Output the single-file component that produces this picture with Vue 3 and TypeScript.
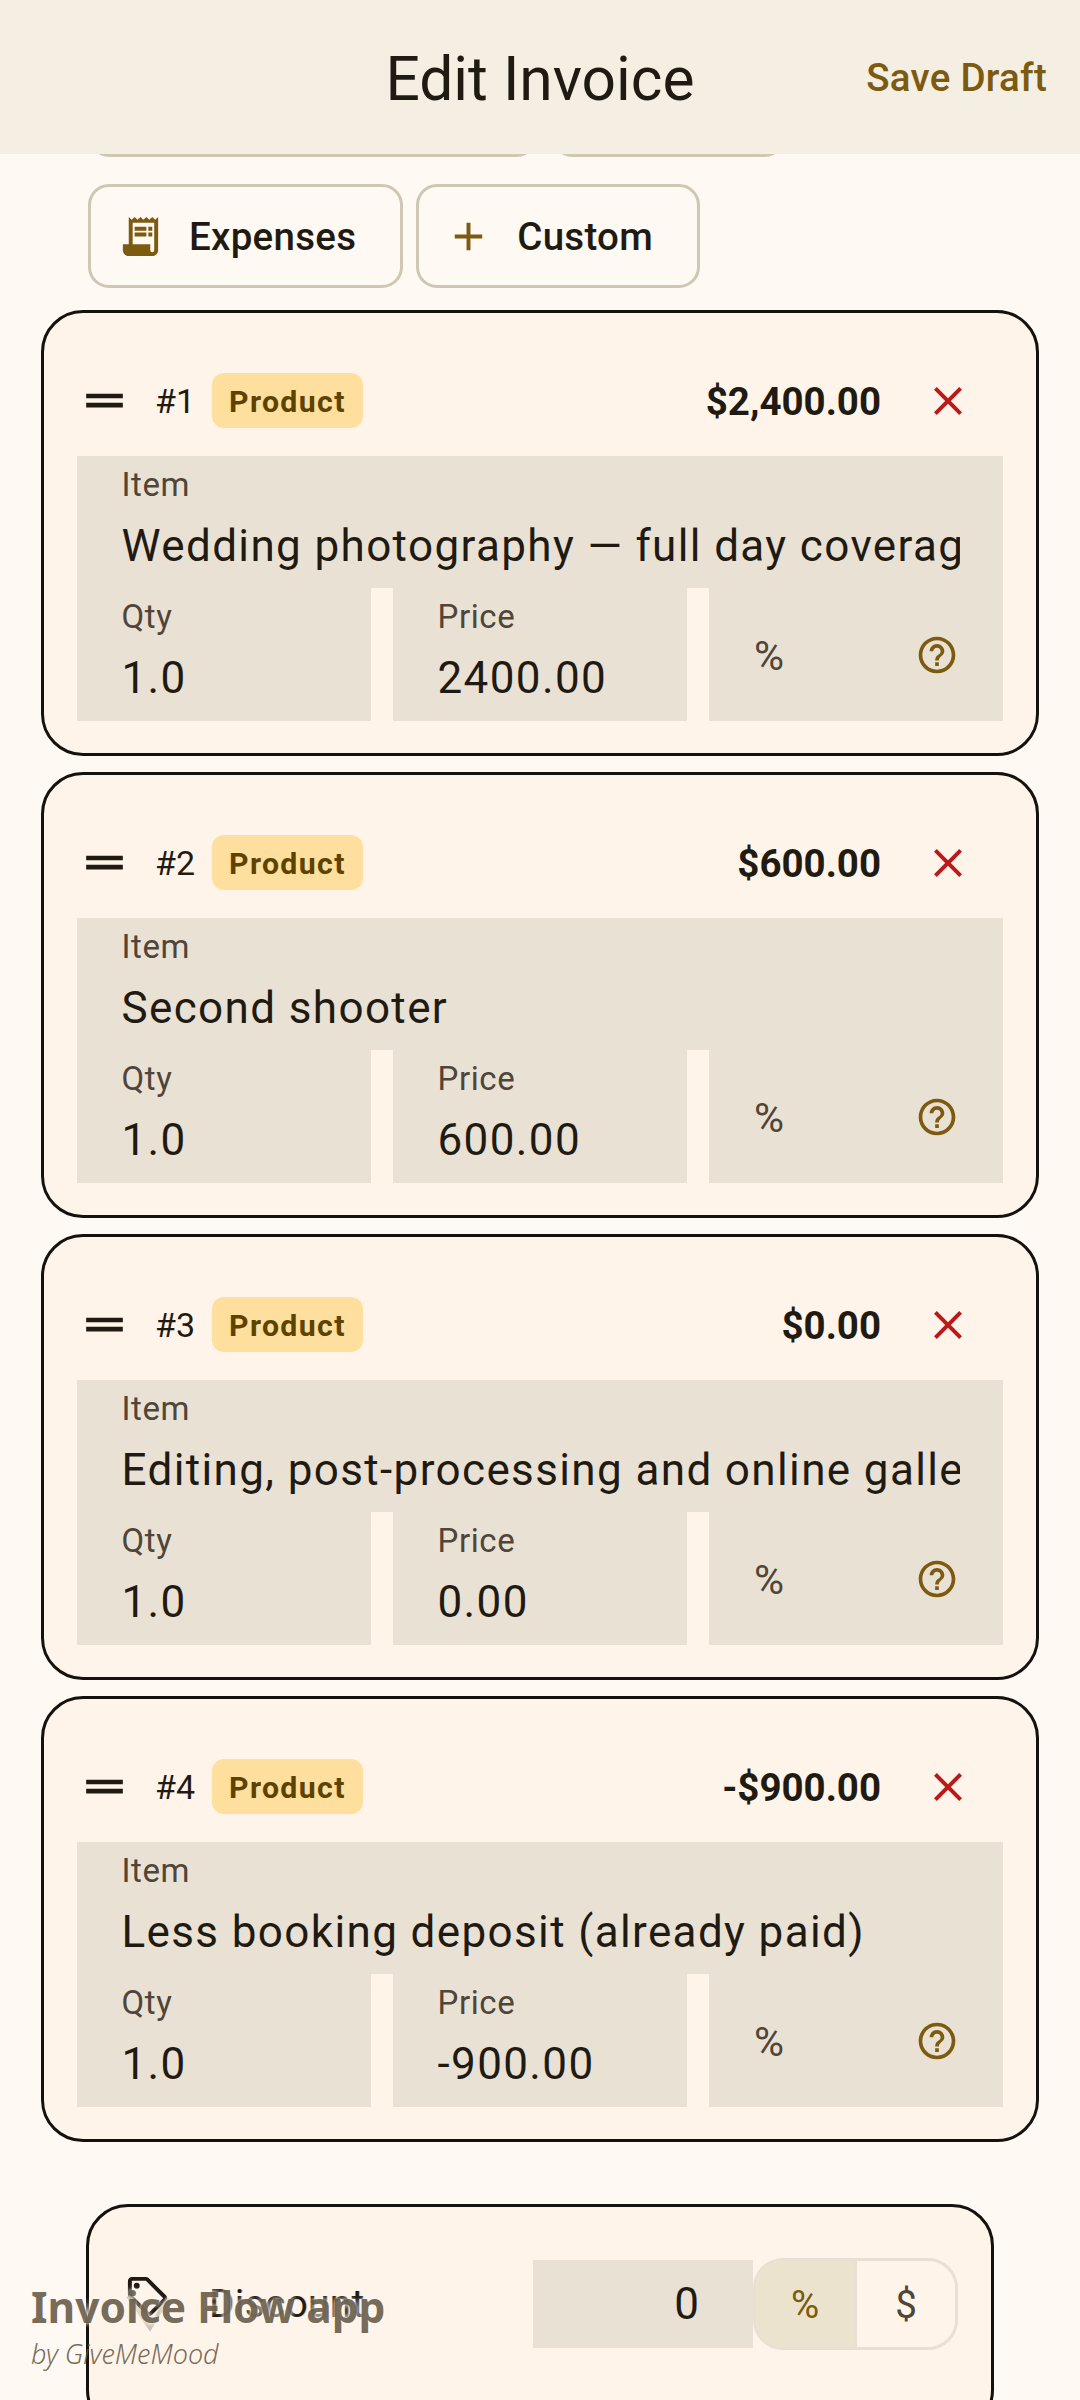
<template>
  <div class="screen">
    <header class="top-bar">
      <h1 class="title">Edit Invoice</h1>
      <button class="save-btn">Save Draft</button>
    </header>

    <div class="content">
      <div class="chip-row">
        <div class="chip chip-wide"></div>
        <div class="chip chip-mid"></div>
      </div>
      <div class="chip-row">
        <button class="chip">
          <svg class="chip-icon" viewBox="0 0 24 24">
            <path d="M19.5 3.5 18 2l-1.5 1.5L15 2l-1.5 1.5L12 2l-1.5 1.5L9 2 7.5 3.5 6 2v14H3v3c0 1.66 1.34 3 3 3h12c1.66 0 3-1.34 3-3V2l-1.5 1.5zM19 19c0 .55-.45 1-1 1s-1-.45-1-1v-3H8V5h11v14z" />
            <path d="M9 7h6v2H9zM16 7h2v2h-2zM9 10h6v2H9zM16 10h2v2h-2z" />
          </svg>
          Expenses
        </button>
        <button class="chip">
          <svg class="chip-icon" viewBox="0 0 24 24">
            <path d="M19 13h-6v6h-2v-6H5v-2h6V5h2v6h6v2z" />
          </svg>
          Custom
        </button>
      </div>

      <div class="items">
        <section v-for="(item, i) in items" :key="i" class="card">
          <div class="card-head">
            <svg class="drag" viewBox="0 0 24 24">
              <path d="M20 9H4v2h16V9zM4 15h16v-2H4v2z" />
            </svg>
            <span class="num">#{{ i + 1 }}</span>
            <span class="badge">Product</span>
            <span class="amount">{{ item.amount }}</span>
            <svg class="remove" viewBox="0 0 24 24">
              <path d="M19 6.41 17.59 5 12 10.59 6.41 5 5 6.41 10.59 12 5 17.59 6.41 19 12 13.41 17.59 19 19 17.59 13.41 12 19 6.41z" />
            </svg>
          </div>
          <div class="field">
            <div class="label">Item</div>
            <div class="value">{{ item.name }}</div>
          </div>
          <div class="field-row">
            <div class="field">
              <div class="label">Qty</div>
              <div class="value">1.0</div>
            </div>
            <div class="field">
              <div class="label">Price</div>
              <div class="value">{{ item.price }}</div>
            </div>
            <div class="field field-tax">
              <span class="percent">%</span>
              <svg class="help" viewBox="0 0 24 24">
                <path d="M11 18h2v-2h-2v2zm1-16C6.48 2 2 6.48 2 12s4.48 10 10 10 10-4.48 10-10S17.52 2 12 2zm0 18c-4.41 0-8-3.59-8-8s3.59-8 8-8 8 3.59 8 8-3.59 8-8 8zm0-14c-2.21 0-4 1.79-4 4h2c0-1.1.9-2 2-2s2 .9 2 2c0 2-3 1.75-3 5h2c0-2.25 3-2.5 3-5 0-2.21-1.79-4-4-4z" />
              </svg>
            </div>
          </div>
        </section>
      </div>

      <section class="discount">
        <svg class="tag" viewBox="0 0 24 24">
          <path d="m21.41 11.41-8.83-8.83C12.21 2.21 11.7 2 11.17 2H4c-1.1 0-2 .9-2 2v7.17c0 .53.21 1.04.59 1.41l8.83 8.83c.78.78 2.05.78 2.83 0l7.17-7.17c.78-.78.78-2.05-.01-2.83zM12.83 20 4 11.17V4h7.17L20 12.83 12.83 20z" />
          <circle cx="6.5" cy="6.5" r="1.5" />
        </svg>
        <!-- faded smear the watermark leaves over the tag -->
        <svg class="tag-ghost" viewBox="0 0 48 40">
          <polyline points="4,4 26,36 44,6" />
        </svg>
        <span class="discount-label">Discount</span>
        <div class="discount-input">0</div>
        <div class="toggle">
          <span class="seg seg-on">%</span>
          <span class="seg">$</span>
        </div>
      </section>
    </div>

    <div class="watermark">
      <div class="wm-name">Invoice Flow app</div>
      <div class="wm-by">by GiveMeMood</div>
    </div>
  </div>
</template>

<script setup lang="ts">
interface LineItem {
  name: string;
  price: string;
  amount: string;
}

const items: LineItem[] = [
  { name: 'Wedding photography — full day coverage', price: '2400.00', amount: '$2,400.00' },
  { name: 'Second shooter', price: '600.00', amount: '$600.00' },
  { name: 'Editing, post-processing and online gallery', price: '0.00', amount: '$0.00' },
  { name: 'Less booking deposit (already paid)', price: '-900.00', amount: '-$900.00' },
];
</script>

<style>
html,
body {
  margin: 0;
  background: #fff9f3;
}
</style>

<style scoped>
.screen {
  position: relative;
  width: 1080px;
  height: 2400px;
  overflow: hidden;
  background: #fff9f3;
  font-family: Roboto, sans-serif;
  color: #1f1b13;
}

.top-bar {
  position: absolute;
  top: 0;
  left: 0;
  right: 0;
  z-index: 2;
  height: 154px;
  box-sizing: border-box;
  padding: 0 33px;
  background: #f4eee3;
  display: grid;
  grid-template-columns: 1fr auto 1fr;
  align-items: center;
}

.title {
  grid-column: 2;
  margin: 4px 0 0;
  font-size: 60.5px;
  font-weight: 400;
}

.save-btn {
  grid-column: 3;
  justify-self: end;
  padding: 0;
  border: none;
  background: none;
  font-family: inherit;
  font-size: 38.5px;
  font-weight: 500;
  letter-spacing: 0.275px;
  color: #7c5a10;
}

.content {
  padding-top: 53px;
}

.chip-row {
  display: flex;
  gap: 13px;
  padding-left: 88px;
  margin-bottom: 27px;
}

.chip {
  box-sizing: border-box;
  height: 104px;
  padding: 0 44px 0 26px;
  display: flex;
  align-items: center;
  gap: 25px;
  border: 3px solid #cfc6b4;
  border-radius: 21px;
  background: #fff9f3;
  font-family: inherit;
  font-size: 38.5px;
  font-weight: 500;
  letter-spacing: 0.275px;
  color: #1f1b13;
}

.chip-wide {
  width: 450px;
}

.chip-mid {
  width: 235px;
}

.chip-icon {
  width: 47px;
  height: 47px;
  fill: #7c5a10;
}

.items {
  display: flex;
  flex-direction: column;
  gap: 16px;
  margin: -5px 41px 0;
}

.card {
  box-sizing: border-box;
  height: 446px;
  padding: 32px 33px;
  border: 3px solid #14120e;
  border-radius: 42px;
  background: #fff4e9;
}

.card-head {
  height: 111px;
  padding-right: 31px;
  display: flex;
  align-items: center;
}

.drag {
  width: 55px;
  height: 55px;
  fill: #1f1b13;
}

.num {
  margin-left: 23px;
  font-size: 34px;
}

.badge {
  box-sizing: border-box;
  margin-left: 17px;
  height: 55px;
  padding: 2px 17px 0;
  display: flex;
  align-items: center;
  border-radius: 12px;
  background: #ffdf9e;
  font-size: 30.25px;
  font-weight: 700;
  letter-spacing: 1.375px;
  color: #5c4300;
}

.amount {
  margin-left: auto;
  padding-top: 2px;
  font-size: 38.5px;
  font-weight: 700;
}

.remove {
  margin-left: 43px;
  width: 48px;
  height: 48px;
  fill: #ba1a1a;
}

.field {
  box-sizing: border-box;
  height: 132px;
  padding: 8px 43px 0 44.5px;
  background: #eae1d5;
}

.field-row {
  display: grid;
  grid-template-columns: repeat(3, 294px);
  column-gap: 22px;
}

.field-row .field {
  height: 133px;
}

.label {
  font-size: 33px;
  line-height: 42px;
  letter-spacing: 0.6px;
  color: #4f4539;
}

.value {
  margin-top: 13px;
  font-size: 44px;
  line-height: 55px;
  letter-spacing: 1.375px;
  white-space: nowrap;
  overflow: hidden;
}

.field-row .field.field-tax {
  padding: 0 44px 0 45px;
  display: flex;
  align-items: center;
  justify-content: space-between;
}

.percent {
  margin-top: 2px;
  font-size: 41px;
  color: #4f4539;
}

.help {
  width: 44px;
  height: 44px;
  fill: #7c5a10;
}

.discount {
  position: relative;
  box-sizing: border-box;
  height: 228px;
  margin: 62px 86px 0;
  padding: 51px 33px 0 35px;
  display: flex;
  align-items: flex-start;
  border: 3px solid #14120e;
  border-radius: 42px;
  background: #fff4e9;
}

.tag {
  width: 47px;
  height: 47px;
  margin-top: 15px;
  fill: #1f1b13;
}

.tag-ghost {
  position: absolute;
  left: 35px;
  top: 85px;
  width: 48px;
  height: 40px;
  fill: none;
  stroke: rgba(170, 165, 155, 0.6);
  stroke-width: 4;
}

.discount-label {
  margin-left: 38px;
  font-size: 38.5px;
  line-height: 92px;
  letter-spacing: 0.5px;
  text-shadow: 1px 0 rgba(150, 145, 135, 0.5);
}

.discount-input {
  box-sizing: border-box;
  width: 220px;
  height: 88px;
  margin: 2px 0 0 auto;
  padding-right: 54px;
  background: #eae1d5;
  font-size: 44px;
  line-height: 88px;
  text-align: right;
}

.toggle {
  box-sizing: border-box;
  width: 205px;
  height: 92px;
  display: flex;
  overflow: hidden;
  border: 3px solid #e9e0d4;
  border-radius: 30px;
  font-size: 38.5px;
  color: #4f4539;
}

.seg {
  flex: 1;
  display: flex;
  align-items: center;
  justify-content: center;
}

.seg-on {
  border-right: 3px solid #e9e0d4;
  background: #ebe3cd;
  color: #7c5a10;
}

.watermark {
  position: absolute;
  left: 31px;
  top: 2279px;
  z-index: 3;
  font-family: "Noto Sans", sans-serif;
}

.wm-name {
  font-size: 42.5px;
  line-height: 56px;
  font-weight: 700;
  color: rgba(94, 82, 62, 0.85);
  text-shadow: 0 0 5px rgba(255, 249, 243, 0.85), 0 0 5px rgba(255, 249, 243, 0.6);
}

.wm-by {
  margin-top: 1px;
  font-size: 27px;
  line-height: 36px;
  font-style: italic;
  font-weight: 300;
  color: rgba(94, 82, 62, 0.85);
}
</style>
